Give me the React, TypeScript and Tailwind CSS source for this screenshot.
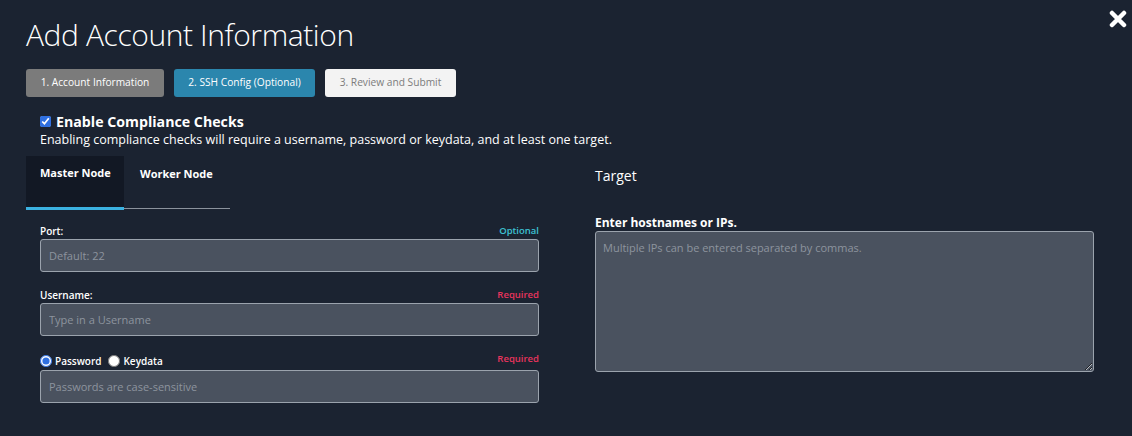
import React from "react";

const Field: React.FC<{
  label: React.ReactNode;
  hint: string;
  hintClass: string;
  placeholder: string;
  tall?: boolean;
}> = ({label, hint, hintClass, placeholder, tall}) => {
  return (
    <div className="flex flex-col">
      <div className={`flex items-end justify-between mb-[3px] ${tall ? "h-[17px]" : "h-[14px]"}`}>
        <div className="text-[10px] font-semibold text-white leading-none">{label}</div>
        <div className={`text-[9.5px] font-semibold leading-none ${tall ? "mb-[4px]" : "mb-[1px]"} ${hintClass}`}>{hint}</div>
      </div>
      <input
        className="h-[33px] w-full rounded-[3px] border border-[#9ba3ad] bg-[#4a525f] px-2 text-[11px] text-white placeholder:text-[#8d949e] outline-none"
        placeholder={placeholder}
      />
    </div>
  );
};

export default function App() {
  return (
    <div
      className="relative h-[436px] w-[1132px] overflow-hidden bg-[#1b2331] text-white"
      style={{fontFamily: '"Open Sans", "Noto Sans", sans-serif'}}
    >
      <button className="absolute right-[5px] top-[10px] text-white">
        <svg width="18" height="18" viewBox="0 0 18 18">
          <path d="M3 3 L15 15 M15 3 L3 15" stroke="white" strokeWidth="4.5" strokeLinecap="round"/>
        </svg>
      </button>

      <div className="pl-[26px] pt-[14px]">
        <h1 className="text-[30px] font-light leading-[42px] tracking-[-0.4px]">Add Account Information</h1>

        <div className="mt-[13px] flex gap-[10px]">
          <div className="flex h-[28px] w-[138px] items-center justify-center rounded-[3px] bg-[#7b7b7b] text-[10.2px] text-white">
            1. Account Information
          </div>
          <div className="flex h-[28px] w-[141px] items-center justify-center rounded-[3px] bg-[#2b86ad] text-[10.2px] text-white">
            2. SSH Config (Optional)
          </div>
          <div className="flex h-[28px] w-[131px] items-center justify-center rounded-[3px] bg-[#f3f3f3] text-[10.2px] text-[#7c7c7c]">
            3. Review and Submit
          </div>
        </div>

        <div className="mt-[16px] pl-[14px]">
          <label className="flex items-center gap-[5px]">
            <input type="checkbox" defaultChecked className="h-[11px] w-[11px] accent-[#2f6fe0]"/>
            <span className="text-[14.2px] font-bold leading-[17px]">Enable Compliance Checks</span>
          </label>
          <div className="mt-[1px] text-[12.5px] leading-[17px] text-white">
            Enabling compliance checks will require a username, password or keydata, and at least one target.
          </div>
        </div>

        <div className="mt-[8px] flex">
          <div className="w-[513px]">
            <div className="flex w-[204px] border-b border-[#8b929c]">
              <div className="relative h-[52px] w-[98px] bg-[#121824] pl-[14px] pt-[9px] text-[11px] font-bold">
                Master Node
                <div className="absolute bottom-[-2px] left-0 h-[3px] w-full bg-[#3bb1e0]"/>
              </div>
              <div className="pl-[16px] pt-[10px] text-[11px] font-bold">Worker Node</div>
            </div>

            <div className="mt-[13px] flex flex-col gap-[14px] pl-[14px]">
              <Field label="Port:" hint="Optional" hintClass="text-[#3dc1d3]" placeholder="Default: 22"/>
              <Field label="Username:" hint="Required" hintClass="text-[#e8345d]" placeholder="Type in a Username"/>
              <Field
                tall
                label={
                  <span className="flex items-center gap-[7px]">
                    <span className="flex items-center gap-[3px]">
                      <input type="radio" name="auth" defaultChecked className="h-[12px] w-[12px] accent-[#2f6fe0]"/>
                      Password
                    </span>
                    <span className="flex items-center gap-[3px]">
                      <input type="radio" name="auth" className="h-[12px] w-[12px]"/>
                      Keydata
                    </span>
                  </span>
                }
                hint="Required"
                hintClass="text-[#e8345d]"
                placeholder="Passwords are case-sensitive"
              />
            </div>
          </div>

          <div className="ml-[56px] flex-1 pr-[38px]">
            <div className="pt-[10px] text-[14px] leading-[20px]">Target</div>
            <div className="mt-[29px] text-[12px] font-bold leading-[16px]">Enter hostnames or IPs.</div>
            <textarea
              className="h-[141px] w-[499px] rounded-[3px] border border-[#9ba3ad] bg-[#4a525f] px-[7px] py-[8px] text-[11px] text-white placeholder:text-[#8d949e] outline-none"
              placeholder="Multiple IPs can be entered separated by commas."
            />
          </div>
        </div>
      </div>
    </div>
  );
}
